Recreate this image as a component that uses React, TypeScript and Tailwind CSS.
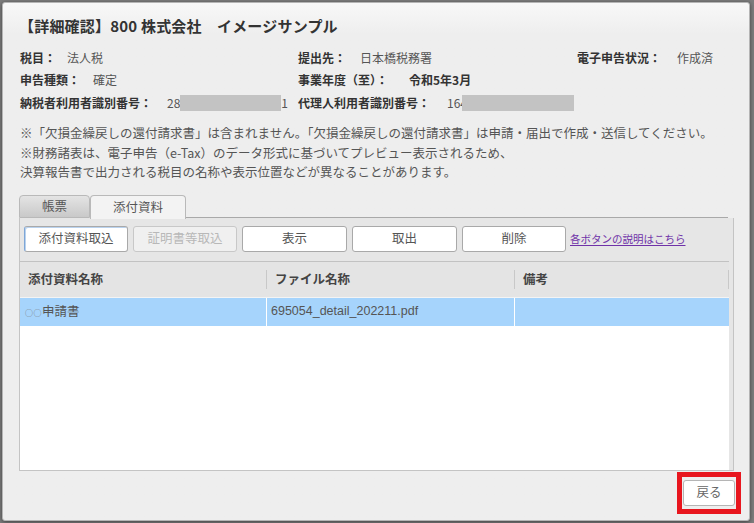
import React from 'react';

const font = { fontFamily: '"Noto Sans CJK JP", "Noto Sans", sans-serif' };

const buttons = [
    { label: '添付資料取込', w: 'w-[104px]', focused: true },
    { label: '証明書等取込', w: 'w-[104px]', disabled: true },
    { label: '表示', w: 'w-[105px]' },
    { label: '取出', w: 'w-[105px]' },
    { label: '削除', w: 'w-[104px]' },
];

export default function App() {
    return (
        <div className="w-[754px] h-[523px] bg-[#7d7d7d] pt-[2px] pl-[2px] overflow-hidden" style={font}>
            <div className="w-[748px] h-[519px] bg-[#eeeeee] border border-[#b5b5b5] rounded-[3px] shadow-[0_1px_4px_rgba(0,0,0,0.5)] flex flex-col bg-gradient-to-b from-[#f8f8f8] to-[#eeeeee] to-[6%]">
                {/* Title */}
                <h1 className="pl-[16px] pt-[12px] h-[44px] text-[15px] font-bold text-[#333] leading-[22px] tracking-[0.2px]">
                    【詳細確認】800 株式会社　イメージサンプル
                </h1>

                {/* Info rows */}
                <div className="pl-[17px] text-[12px] leading-[22px] text-[#555]">
                    <div className="flex h-[22px]">
                        <div className="w-[278px] flex">
                            <span className="font-bold text-[#333] w-[47px]">税目：</span>
                            <span>法人税</span>
                        </div>
                        <div className="w-[279px] flex">
                            <span className="font-bold text-[#333] w-[62px]">提出先：</span>
                            <span>日本橋税務署</span>
                        </div>
                        <div className="flex">
                            <span className="font-bold text-[#333] w-[100px]">電子申告状況：</span>
                            <span>作成済</span>
                        </div>
                    </div>
                    <div className="flex h-[22px]">
                        <div className="w-[278px] flex">
                            <span className="font-bold text-[#333] w-[73px]">申告種類：</span>
                            <span>確定</span>
                        </div>
                        <div className="flex">
                            <span className="font-bold text-[#333] w-[111px]">事業年度（至）：</span>
                            <span className="font-bold text-[#333]">令和5年3月</span>
                        </div>
                    </div>
                    <div className="flex h-[23px] items-center">
                        <div className="w-[278px] flex items-center">
                            <span className="font-bold text-[#333] w-[147px]">納税者利用者識別番号：</span>
                            <span>28</span>
                            <span className="w-[101px] h-[16px] bg-[#c3c3c3]" />
                            <span>1</span>
                        </div>
                        <div className="flex items-center">
                            <span className="font-bold text-[#333] w-[149px]">代理人利用者識別番号：</span>
                            <span>164</span>
                            <span className="w-[112px] h-[16px] bg-[#c3c3c3] -ml-[5px]" />
                        </div>
                    </div>
                </div>

                {/* Notes */}
                <div className="pl-[17px] pt-[9px] text-[12.5px] leading-[19.5px] text-[#555]">
                    <p>※「欠損金繰戻しの還付請求書」は含まれません。「欠損金繰戻しの還付請求書」は申請・届出で作成・送信してください。</p>
                    <p>※財務諸表は、電子申告（e-Tax）のデータ形式に基づいてプレビュー表示されるため、</p>
                    <p>決算報告書で出力される税目の名称や表示位置などが異なることがあります。</p>
                </div>

                {/* Tabs */}
                <div className="mt-[13px] ml-[16px] mr-[21px] flex items-end h-[23px] text-[12.5px] text-[#555]">
                    <div className="w-[71px] h-[23px] border border-[#b9b9b9] rounded-t-[4px] bg-gradient-to-b from-[#e4e4e4] to-[#c9c9c9] flex items-center justify-center">
                        帳票
                    </div>
                    <div className="w-[96px] h-[24px] -mb-[1px] border border-b-0 border-[#b9b9b9] rounded-t-[4px] bg-[#f3f3f3] flex items-center justify-center relative z-10">
                        添付資料
                    </div>
                    <div className="flex-1 border-b border-[#a9a9a9]" />
                </div>

                {/* Panel */}
                <div className="ml-[16px] mr-[15px] h-[253px] border-l border-r border-b border-[#c4c4c4] bg-[#e6e6e6] flex flex-col pr-[4px]">
                    <div className="h-[43px] flex items-center gap-[5px] pl-[4px] pb-[1px]">
                        {buttons.map((b) => (
                            <button
                                key={b.label}
                                className={`${b.w} h-[26px] rounded-[3px] text-[12.5px] flex items-center justify-center ${
                                    b.disabled
                                        ? 'bg-[#f0f0f0] border border-[#c8c8c8] text-[#b8b8b8]'
                                        : b.focused
                                        ? 'bg-white border border-[#a9a9a9] border-l-[#7ea6d6] shadow-[inset_1px_1px_0_#b9d2ee] text-[#555]'
                                        : 'bg-white border border-[#a9a9a9] text-[#555]'
                                }`}
                            >
                                {b.label}
                            </button>
                        ))}
                        <a className="ml-[-1px] text-[10.5px] text-[#6f32a8] underline underline-offset-2">各ボタンの説明はこちら</a>
                    </div>

                    {/* Table */}
                    <div className="flex-1 flex flex-col border-t border-[#c2c2c2] bg-white">
                        <div className="h-[36px] flex items-center bg-[#e4e4e4] border-b border-[#f4f4f4] text-[12.5px] font-bold text-[#444]">
                            <div className="w-[247px] pl-[8px] h-full flex items-center border-r border-[#cfcfcf] [border-image:linear-gradient(transparent_25%,#c8c8c8_25%,#c8c8c8_75%,transparent_75%)_1]">添付資料名称</div>
                            <div className="w-[248px] pl-[8px] h-full flex items-center border-r border-[#cfcfcf] [border-image:linear-gradient(transparent_25%,#c8c8c8_25%,#c8c8c8_75%,transparent_75%)_1]">ファイル名称</div>
                            <div className="flex-1 pl-[8px] h-full flex items-center border-r border-[#cfcfcf] [border-image:linear-gradient(transparent_25%,#c8c8c8_25%,#c8c8c8_75%,transparent_75%)_1]">備考</div>
                        </div>
                        <div className="h-[28px] flex items-center bg-[#a6d4fc] text-[12.5px] text-[#555]">
                            <div className="w-[247px] pl-[5px] h-full flex items-center border-r border-white">
                                <span className="text-[8px] text-[#777] pt-[2px] tracking-[0.5px]">○○</span>
                                <span>申請書</span>
                            </div>
                            <div className="w-[248px] pl-[4px] h-full flex items-center border-r border-white" style={{ fontFamily: '"Liberation Sans", "Noto Sans CJK JP", sans-serif' }}>695054_detail_202211.pdf</div>
                            <div className="flex-1 h-full" />
                        </div>
                    </div>
                </div>

                {/* Footer */}
                <div className="flex-1 flex justify-end items-start pt-[1px] pr-[8px]">
                    <div className="border-[5px] border-[#e8161e] px-[1px] py-[3px]">
                        <button className="w-[52px] h-[26px] bg-white border border-[#b5b5b5] rounded-[3px] text-[12.5px] text-[#666] flex items-center justify-center">
                            戻る
                        </button>
                    </div>
                </div>
            </div>
        </div>
    );
}
